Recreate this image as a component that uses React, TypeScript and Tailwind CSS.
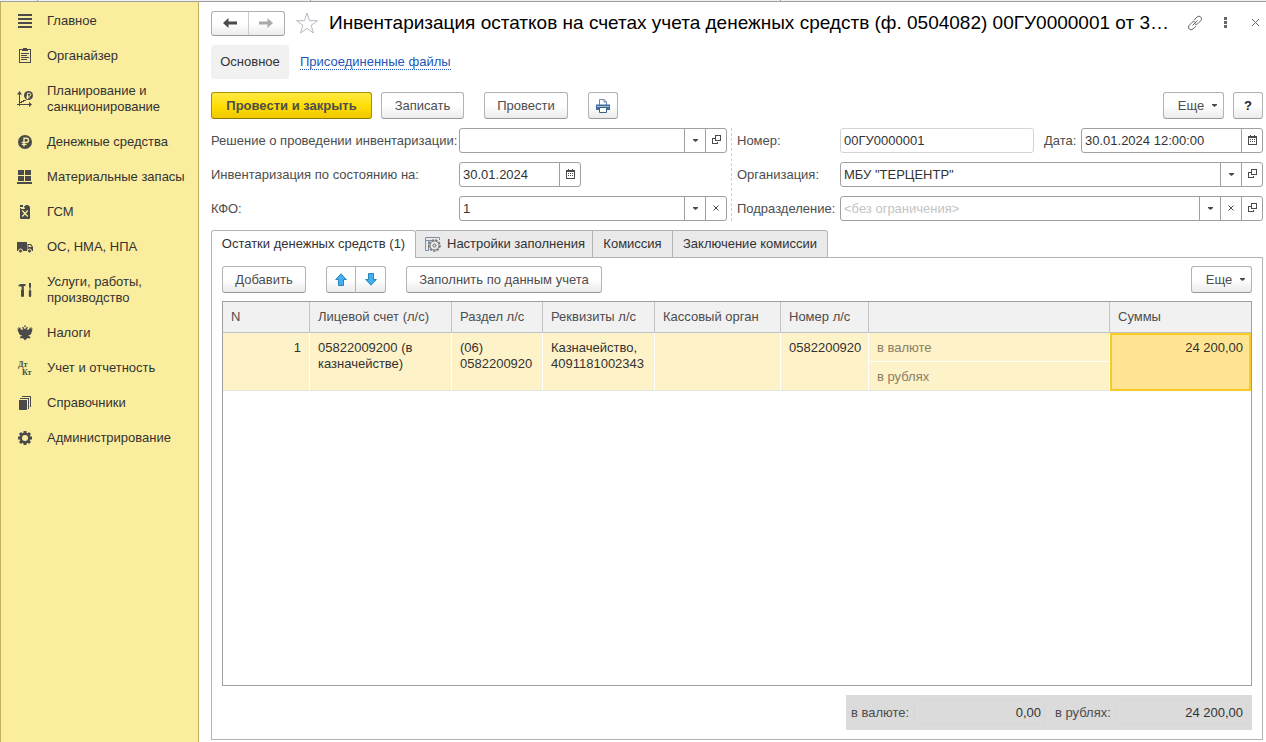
import type { ButtonHTMLAttributes, ReactNode } from "react"
import { clsx } from "clsx"

export default function App() {
  return (
    <div className="flex min-h-screen flex-col bg-white font-['Liberation_Sans',Arial,sans-serif] text-[13px] leading-4 text-[#4d4d4d]">
      <TopStrip />
      <div className="flex flex-1">
        <Sidebar />
        <main className="flex min-w-0 flex-1 flex-col pt-2 pr-[3px] pb-[2px] pl-3">
          <Header />
          <SectionLinks />
          <CommandBar />
          <DocumentFields />
          <Tabs />
          <CashPanel />
        </main>
      </div>
    </div>
  )
}

function TopStrip() {
  return (
    <div className="flex h-[2px] border-b border-[#a0a0a0] bg-[#f0f0f0]">
      <div className="w-[38px] border-r border-[#a0a0a0]" />
      <div className="w-[273px] border-r border-[#a0a0a0]" />
      <div className="w-[470px] border-r border-[#a0a0a0]" />
    </div>
  )
}

const menuItems: { label: string; icon: ReactNode }[] = [
  {
    label: "Главное",
    icon: <path d="M1 1h14v2H1zM1 5h14v2H1zM1 9h14v2H1zM1 13h14v2H1z" shapeRendering="crispEdges" />,
  },
  {
    label: "Органайзер",
    icon: (
      <g shapeRendering="crispEdges">
        <path d="M2.5 1.5h11v13h-11z" fill="none" stroke="currentColor" />
        <path d="M5 1h1V0h4v1h1v2H5zM4 5h8v1H4zM4 7h6v1H4zM4 9h8v1H4zM4 11h6v1H4z" />
      </g>
    ),
  },
  {
    label: "Планирование и санкционирование",
    icon: (
      <>
        <path d="M2.5 1v14M0 13.5h14M2.5 13.5v-2h2v-1h2v-1h2v-1" fill="none" stroke="currentColor" shapeRendering="crispEdges" />
        <path d="M2.5 0 5 3.5H0zM15 13.5 12 11v5z" />
        <circle cx="11.5" cy="4.5" r="4.5" />
        <path d="M10.5 8V2.2h1.8a1.5 1.5 0 0 1 0 3H9.3M9.3 6.7h3.2" fill="none" stroke="#fbed9e" />
      </>
    ),
  },
  {
    label: "Денежные средства",
    icon: (
      <>
        <circle cx="8" cy="8" r="7" />
        <path d="M7 12.5V4.2h2.4a2 2 0 0 1 0 4.2H4.8M4.8 10.4h4.8" fill="none" stroke="#fbed9e" strokeWidth="1.4" />
      </>
    ),
  },
  {
    label: "Материальные запасы",
    icon: <path d="M1 1h6v5H1zM8 1h6v5H8zM1 7h6v5H1zM8 7h6v5H8zM0 13h15v2H0z" shapeRendering="crispEdges" />,
  },
  {
    label: "ГСМ",
    icon: (
      <>
        <path d="M3 3.5 4.5 5H13v9q0 1-1 1H4q-1 0-1-1zM3 1h3v2H3zM7 2.5 9 1h2l2 2v2H8z" />
        <path d="m5.2 6.5 5.6 6M10.8 6.5l-5.6 6" stroke="#fbed9e" strokeWidth="1.3" />
      </>
    ),
  },
  {
    label: "ОС, НМА, НПА",
    icon: (
      <>
        <path d="M0 3h10v9H0zM10.500 5h3.500L16 8v4h-5.500z" />
        <path d="M11.5 6h1.8l1.4 2h-3.2z" fill="#fbed9e" />
        <circle cx="3.5" cy="12" r="2" stroke="#fbed9e" />
        <circle cx="12.5" cy="12" r="2" stroke="#fbed9e" />
      </>
    ),
  },
  {
    label: "Услуги, работы, производство",
    icon: (
      <path d="M1 4 3 2h5.5v2H6.800v4H7v6q0 1-1.500 1T4 14V8h.6V4.500H3zM12 1h2v4l-.5 1v2.500h.7V14q0 1-1.200 1t-1.200-1V8.500h.7V6L12 5z" />
    ),
  },
  {
    label: "Налоги",
    icon: (
      <path d="M8 0l1 1.200L8 2.300 7 1.200zM5.500 2 7 2.500 7.500 4h1L9 2.500 10.500 2l.5 1-1 .7.300 1.300 1.700-.5L13 2l.3 1.500 1-2L14.500 4l1-1-.5 3.500-.8 1.500.300.500-1.500 1.500-2 .5 2.500 1.500-.7 1.500-2-.5L9.300 14 8 15.500 6.700 14l-1.200-1-2 .5L2.800 12l2.500-1.500-2-.5-1.500-1.500.300-.5L1 6.500.5 3l1 1 .2-2.500 1 2L3 2l1 2.500 1.700.5L6 3.700 5 3z" />
    ),
  },
  {
    label: "Учет и отчетность",
    icon: (
      <g fontFamily="Liberation Serif, serif" fontWeight="bold" fontSize="8">
        <text x="1" y="7">Дт</text>
        <text x="5" y="15">Кт</text>
      </g>
    ),
  },
  {
    label: "Справочники",
    icon: (
      <g shapeRendering="crispEdges">
        <path d="M2 5h8v10H2z" />
        <path d="M3 3.500h8.500V14M5 1.500h8.500V12" fill="none" stroke="currentColor" />
      </g>
    ),
  },
  {
    label: "Администрирование",
    icon: (
      <>
        <path
          d="M8 1v14M1 8h14M3 3l10 10M13 3 3 13"
          fill="none"
          stroke="currentColor"
          strokeWidth="3"
        />
        <circle cx="8" cy="8" r="5.500" />
        <circle cx="8" cy="8" r="3" fill="#fbed9e" />
      </>
    ),
  },
]

function Sidebar() {
  return (
    <nav className="w-[199px] shrink-0 border-r border-l border-[#c0b060] bg-[#fbed9e] pt-[11px] pl-4 text-[#333]">
      <ul className="flex flex-col gap-[19px]">
        {menuItems.map((item) => (
          <li key={item.label}>
            <a href="#" className="flex items-center gap-[14px]">
              <svg viewBox="0 0 16 16" className="size-4 shrink-0 overflow-visible fill-current text-[#4a4a4a]" aria-hidden="true">
                {item.icon}
              </svg>
              <span className="max-w-[146px]">{item.label}</span>
            </a>
          </li>
        ))}
      </ul>
    </nav>
  )
}

function Header() {
  return (
    <header className="flex h-[26px] items-center">
      <div className="flex h-[25px] w-[74px] shrink-0 rounded-[3px] border border-[#b0b0b0] border-b-[#999] bg-linear-to-b from-white from-50% to-[#ececec]">
        <button aria-label="Назад" className="flex flex-1 items-center justify-center border-r border-[#ccc] text-[#4a4a4a]">
          <ArrowIcon />
        </button>
        <button aria-label="Вперед" className="flex flex-1 items-center justify-center text-[#aaa]">
          <ArrowIcon className="rotate-180" />
        </button>
      </div>
      <button aria-label="В избранное" className="ml-[10px] shrink-0">
        <svg viewBox="0 0 24 24" className="size-6 fill-none stroke-[#b4b9c0]">
          <path d="M12 2l2.500 7.700h8l-6.400 4.700 2.400 7.600-6.500-4.600L5.500 22l2.400-7.600-6.400-4.700h8z" />
        </svg>
      </button>
      <h1 className="ml-[10px] min-w-0 flex-1 truncate text-[19px] leading-6 text-black">
        Инвентаризация остатков на счетах учета денежных средств (ф. 0504082) 00ГУ0000001 от 3…
      </h1>
      <div className="ml-3 flex shrink-0 items-center gap-[14px] text-[#666]">
        <button aria-label="Получить ссылку">
          <svg viewBox="0 0 16 16" className="size-4 fill-none stroke-current">
            <path d="M7 5.200 10 2q2-1.800 3.800 0 1.700 1.800 0 3.700l-3 3q-1.500 1.300-3 .3M9 10.800 6 14q-2 1.800-3.800 0-1.700-1.800 0-3.700l3-3q1.500-1.300 3-.3M5.500 10.500l5-5" />
          </svg>
        </button>
        <button aria-label="Дополнительно">
          <svg viewBox="0 0 16 16" className="size-4 fill-current">
            <path d="M7 2h3v3H7zM7 6h3v3H7zM7 10h3v3H7z" />
          </svg>
        </button>
        <button aria-label="Закрыть">
          <svg viewBox="0 0 16 16" className="size-4 fill-none stroke-current">
            <path d="m5 4 7 7M12 4l-7 7" />
          </svg>
        </button>
      </div>
    </header>
  )
}

function SectionLinks() {
  return (
    <nav className="mt-[9px] flex items-center gap-[11px]">
      <a href="#" className="w-[78px] rounded-[3px] bg-[#f1f1f1] py-[9px] text-center text-[#333]">
        Основное
      </a>
      <a href="#" className="border-b border-dotted border-[#2257b8] leading-[14px] text-[#2257b8]">
        Присоединенные файлы
      </a>
    </nav>
  )
}

type ButtonProps = ButtonHTMLAttributes<HTMLButtonElement>

function Button({ className, ...props }: ButtonProps) {
  return (
    <button
      className={clsx(
        "flex h-[27px] items-center justify-center rounded-[3px] border border-[#b3b3b3] border-b-[#999] bg-linear-to-b from-white from-50% to-[#ebebeb] whitespace-nowrap",
        className,
      )}
      {...props}
    />
  )
}

function MoreButton() {
  return (
    <Button className="w-[61px] gap-2 pl-2">
      Еще
      <CaretIcon />
    </Button>
  )
}

function CommandBar() {
  return (
    <div className="mt-[13px] flex items-center">
      <button className="h-[27px] w-[161px] rounded-[3px] border border-[#a89000] border-b-[#8f7a00] bg-linear-to-b from-[#ffe93c] via-[#ffdf00] to-[#f0c800] font-bold whitespace-nowrap">
        Провести и закрыть
      </button>
      <Button className="ml-[9px] w-[83px]">Записать</Button>
      <Button className="ml-5 w-[84px]">Провести</Button>
      <Button className="ml-5 w-[30px]" aria-label="Печать">
        <svg viewBox="0 0 16 16" className="size-4 shrink-0">
          <path d="M4.500 7V1.500H9L11.500 4v3" fill="#fff" stroke="#6c86a6" />
          <path d="M9 1.500V4h2.500" fill="none" stroke="#6c86a6" />
          <path d="M1 6.500h14V12H1z" fill="#3f6d9c" />
          <path d="M2 8h12v1H2z" fill="#9dbbd8" />
          <path d="M4.500 9.500h7v5h-7z" fill="#fff" stroke="#3a5f88" />
        </svg>
      </Button>
      <div className="ml-auto flex gap-[9px]">
        <MoreButton />
        <Button className="w-[30px] font-bold text-[#222]">?</Button>
      </div>
    </div>
  )
}

type FieldAction = "caret" | "open" | "clear" | "calendar"

const actionLabels: Record<FieldAction, string> = {
  caret: "Выбрать из списка",
  open: "Открыть",
  clear: "Очистить",
  calendar: "Календарь",
}

function Field({
  id,
  value,
  placeholder,
  actions = [],
  readOnly,
  className,
}: {
  id: string
  value?: string
  placeholder?: string
  actions?: FieldAction[]
  readOnly?: boolean
  className?: string
}) {
  return (
    <div
      className={clsx(
        "flex h-[25px] rounded-[3px] border bg-white",
        readOnly ? "border-[#d4d4d4]" : "border-[#a0a0a0]",
        className,
      )}
    >
      <input
        id={id}
        type="text"
        defaultValue={value}
        placeholder={placeholder}
        readOnly={readOnly}
        className="w-0 min-w-0 flex-1 px-[3px] text-[#333] outline-none placeholder:text-[#c4c4c4]"
      />
      {actions.map((action) => (
        <button
          key={action}
          type="button"
          aria-label={actionLabels[action]}
          className="flex w-[21px] items-center justify-center border-l border-[#a0a0a0]"
        >
          <FieldIcon action={action} />
        </button>
      ))}
    </div>
  )
}

function DocumentFields() {
  return (
    <form className="mt-[9px] flex">
      <div className="grid w-[516px] shrink-0 grid-cols-[248px_1fr] items-center gap-y-[9px]">
        <label htmlFor="decision">Решение о проведении инвентаризации:</label>
        <Field id="decision" actions={["caret", "open"]} />
        <label htmlFor="state-date">Инвентаризация по состоянию на:</label>
        <Field id="state-date" value="30.01.2024" actions={["calendar"]} className="w-[122px]" />
        <label htmlFor="kfo">КФО:</label>
        <Field id="kfo" value="1" actions={["caret", "clear"]} />
      </div>
      <div className="ml-1 grid min-w-0 flex-1 grid-cols-[103px_1fr] items-center gap-y-[9px] border-l border-dashed border-[#d0d0d0] pl-[5px]">
        <label htmlFor="number">Номер:</label>
        <div className="flex items-center">
          <Field id="number" value="00ГУ0000001" readOnly className="flex-1" />
          <label htmlFor="date" className="w-[47px] pl-[10px]">
            Дата:
          </label>
          <Field id="date" value="30.01.2024 12:00:00" actions={["calendar"]} className="w-[182px]" />
        </div>
        <label htmlFor="organization">Организация:</label>
        <Field id="organization" value={'МБУ "ТЕРЦЕНТР"'} actions={["caret", "open"]} />
        <label htmlFor="department">Подразделение:</label>
        <Field id="department" placeholder="<без ограничения>" actions={["caret", "clear", "open"]} />
      </div>
    </form>
  )
}

function Tabs() {
  const tab = "flex h-7 items-center border border-[#b3b3b3] bg-[#eaeaea] whitespace-nowrap"

  return (
    <div role="tablist" className="relative z-10 mt-[9px] -mb-px flex text-[#333]">
      <button
        role="tab"
        aria-selected="true"
        className="h-7 w-[205px] rounded-t-[3px] border border-b-0 border-[#b3b3b3] bg-white pb-px whitespace-nowrap"
      >
        Остатки денежных средств (1)
      </button>
      <button role="tab" className={clsx(tab, "w-[177px] gap-[6px] border-l-0 pl-2")}>
        <svg viewBox="0 0 17 16" className="h-4 w-[17px] fill-none stroke-[#7d90a8]">
          <path d="M5 14.500H1.500v-13h14V4M1.500 4.500H9M4.500 4.500v10" />
          <circle cx="10.500" cy="9.500" r="5.500" fill="#eaeaea" stroke="#777" strokeDasharray="2.500 1.200" strokeWidth="1.500" />
          <circle cx="10.500" cy="9.500" r="4.500" fill="#eaeaea" stroke="#777" />
          <circle cx="10.500" cy="9.500" r="1.500" stroke="#666" />
        </svg>
        Настройки заполнения
      </button>
      <button role="tab" className={clsx(tab, "w-20 justify-center border-l-0")}>
        Комиссия
      </button>
      <button role="tab" className={clsx(tab, "w-[155px] justify-center rounded-tr-[3px] border-l-0")}>
        Заключение комиссии
      </button>
    </div>
  )
}

function CashPanel() {
  return (
    <section className="flex flex-1 flex-col border border-[#b3b3b3] px-[10px] pt-2 pb-[9px]">
      <div className="flex items-center">
        <Button className="w-[84px]">Добавить</Button>
        <div className="ml-5 flex">
          <Button className="w-[30px] rounded-r-none" aria-label="Вверх">
            <MoveIcon />
          </Button>
          <Button className="w-[30px] rounded-l-none border-l-0" aria-label="Вниз">
            <MoveIcon className="rotate-180" />
          </Button>
        </div>
        <Button className="ml-5 w-[196px]">Заполнить по данным учета</Button>
        <div className="ml-auto">
          <MoreButton />
        </div>
      </div>
      <div className="mt-2 flex-1 border border-[#a0a0a0]">
        <BalanceTable />
      </div>
      <Totals />
    </section>
  )
}

const columns = [
  { title: "N", width: "w-[87px]" },
  { title: "Лицевой счет (л/с)", width: "w-[142px]" },
  { title: "Раздел л/с", width: "w-[91px]" },
  { title: "Реквизиты л/с", width: "w-[112px]" },
  { title: "Кассовый орган", width: "w-[126px]" },
  { title: "Номер л/с", width: "w-[88px]" },
  { title: "", width: "" },
  { title: "Суммы", width: "w-[141px]" },
]

function BalanceTable() {
  const cell = "border-r border-b border-white border-b-[#e4e4e4] px-2 pt-[7px] align-top"

  return (
    <table className="w-full table-fixed border-separate border-spacing-0 text-[#333]">
      <thead className="bg-[#f1f1f1] text-left text-[#4d4d4d]">
        <tr className="h-[31px]">
          {columns.map((column, i) => (
            <th
              key={i}
              className={clsx("border-r border-b border-[#c4c4c4] px-2 font-normal last:border-r-0", column.width)}
            >
              {column.title}
            </th>
          ))}
        </tr>
      </thead>
      <tbody className="bg-[#fef2c8]">
        <tr className="h-[29px]">
          <td rowSpan={2} className={clsx(cell, "text-right")}>1</td>
          <td rowSpan={2} className={cell}>05822009200 (в казначействе)</td>
          <td rowSpan={2} className={cell}>(06) 0582200920</td>
          <td rowSpan={2} className={cell}>Казначейство, 4091181002343</td>
          <td rowSpan={2} className={cell} />
          <td rowSpan={2} className={cell}>0582200920</td>
          <td className="border-r border-b border-white px-2 pt-px text-[#8a8066]">в валюте</td>
          <td rowSpan={2} className="border-2 border-[#f9c926] bg-[#ffe592] px-[6px] pt-[5px] text-right align-top">
            24 200,00
          </td>
        </tr>
        <tr className="h-[29px]">
          <td className="border-r border-b border-white border-b-[#e4e4e4] px-2 pt-px text-[#8a8066]">в рублях</td>
        </tr>
      </tbody>
    </table>
  )
}

function Totals() {
  const total = "h-[25px] rounded-[3px] border border-[#d6d6d6] bg-transparent px-[3px] text-right text-[#333] outline-none"

  return (
    <div className="mt-[9px] flex h-[35px] items-center self-end bg-[#dbdbdb] px-[5px]">
      <label htmlFor="total-currency" className="w-[63px]">
        в валюте:
      </label>
      <input id="total-currency" readOnly value="0,00" className={clsx(total, "w-[131px]")} />
      <label htmlFor="total-rub" className="w-[71px] pl-[10px]">
        в рублях:
      </label>
      <input id="total-rub" readOnly value="24 200,00" className={clsx(total, "w-[131px]")} />
    </div>
  )
}

function ArrowIcon({ className }: { className?: string }) {
  return (
    <svg viewBox="0 0 14 12" className={clsx("h-3 w-[14px] fill-current", className)}>
      <path d="M0 6 5.500 1v3.500H14v3H5.500V11z" />
    </svg>
  )
}

function MoveIcon({ className }: { className?: string }) {
  return (
    <svg viewBox="0 0 12 13" className={clsx("h-[13px] w-3 shrink-0", className)}>
      <path d="M6 .8 11.300 6.500H8.500v6h-5v-6H.7z" fill="#42b0ee" stroke="#2b83bd" />
    </svg>
  )
}

function CaretIcon() {
  return (
    <svg viewBox="0 0 5 3" className="h-[3px] w-[5px] shrink-0 fill-[#4a4a4a]">
      <path d="M0 0h5v1L2.500 3 0 1z" />
    </svg>
  )
}

function FieldIcon({ action }: { action: FieldAction }) {
  if (action === "caret") return <CaretIcon />

  return (
    <svg viewBox="0 0 11 11" className="size-[11px] fill-none stroke-[#4a4a4a]">
      {action === "open" && (
        <path d="M4.500 .5h5v5h-5zM3.500 3.500h-2v5h5v-2" shapeRendering="crispEdges" />
      )}
      {action === "clear" && <path d="m2.500 2.500 5 5M7.500 2.500l-5 5" />}
      {action === "calendar" && (
        <g shapeRendering="crispEdges">
          <path d="M1.500 1.500h8v8h-8zM1 2.500h9M3.500 0v3M7.500 0v3" />
          <path d="M3 4.500h1M5 4.500h1M7 4.500h1M3 6.500h1M5 6.500h1M7 6.500h1" />
        </g>
      )}
    </svg>
  )
}
